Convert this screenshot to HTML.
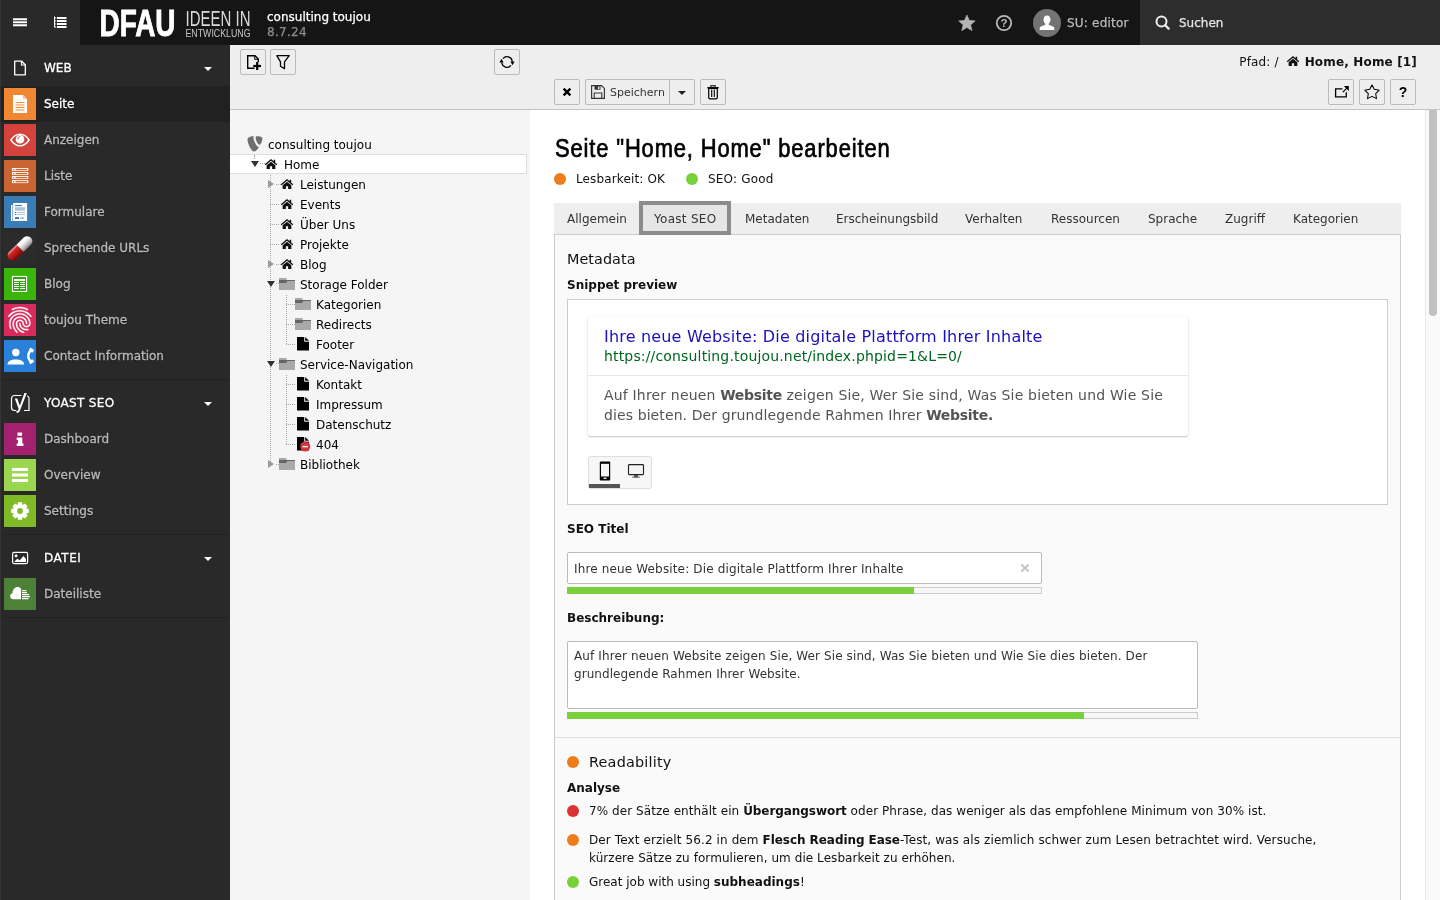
<!DOCTYPE html>
<html lang="de">
<head>
<meta charset="utf-8">
<title>consulting toujou [TYPO3 CMS 8.7.24]</title>
<style>
*{box-sizing:border-box;margin:0;padding:0}
html,body{width:1440px;height:900px;overflow:hidden;background:#fff}
body>div{will-change:transform;filter:grayscale(0)}
body{font-family:"DejaVu Sans","Liberation Sans",sans-serif;font-size:12px;line-height:18px;color:#111;position:relative}
.abs{position:absolute}
svg{display:block}
/* ---------- topbar ---------- */
#topbar{position:absolute;left:0;top:0;width:1440px;height:45px;background:#151515;color:#fff}
#toggles{position:absolute;left:0;top:0;width:80px;height:45px;background:#292929;border-left:1px solid #363636}
#sitename{position:absolute;left:267px;top:10px;font-size:12px;line-height:14px;color:#fff;white-space:nowrap}
#sitename span{display:block;color:#8c8c8c;margin-top:1px;letter-spacing:.3px}
#user{letter-spacing:.2px;position:absolute;left:1067px;top:16px;font-size:12px;line-height:14px;color:#bbb;white-space:nowrap}
#search{position:absolute;left:1140px;top:0;width:300px;height:45px;background:#2d2d2d}
#search span{position:absolute;left:39px;top:16px;font-size:12px;line-height:14px;color:#e6e6e6}
#sitename,#user,#search span{-webkit-text-stroke:.25px}
/* ---------- module menu ---------- */
#modmenu{position:absolute;left:0;top:45px;width:230px;height:855px;background:#292929;border-left:1px solid #363636}
.mgroup{position:absolute;left:0;width:229px;height:36px;color:#fff;font-size:12px}
.mgroup b{position:absolute;left:43px;top:9px;line-height:18px;font-weight:normal}
.mgroup i{position:absolute;left:203px;top:17px;width:0;height:0;border-left:4px solid transparent;border-right:4px solid transparent;border-top:4px solid #fff}
.mgroup svg{position:absolute;left:12px;top:10px}
.mitem{position:absolute;left:0;width:229px;height:36px;color:#b9b9b9;font-size:12px}
.mitem.act{background:#212121;color:#fff}
.mitem span{position:absolute;left:43px;top:9px;line-height:18px;white-space:nowrap}
.mitem .ic{position:absolute;left:3px;top:2px;width:32px;height:32px}
.mgroup b,.mitem span{-webkit-text-stroke:.3px;text-shadow:0 1px 1px rgba(0,0,0,.55)}
.msep{position:absolute;left:0;width:229px;height:1px;background:#222}
/* ---------- tree ---------- */
#treehead{position:absolute;left:230px;top:45px;width:300px;height:65px;background:#eee;border-bottom:1px solid #c3c3c3}
#tree{position:absolute;left:230px;top:110px;width:300px;height:790px;background:#f5f5f5}
.btn{position:absolute;width:26px;height:26px;background:#eee;border:1px solid #bbb;border-radius:2px}
.tn{position:absolute;height:20px;line-height:22px;font-size:12px;color:#000;white-space:nowrap}
/* ---------- content ---------- */
#dochead{position:absolute;left:530px;top:45px;width:910px;height:65px;background:#eee;border-bottom:1px solid #c3c3c3}
#content{position:absolute;left:530px;top:110px;width:910px;height:790px;background:#fff;overflow:hidden}
</style>
</head>
<body>
<div id="topbar">
  <div id="toggles">
    <svg class="abs" style="left:11px;top:15px" width="16" height="16" viewBox="0 0 16 16"><path d="M1 3.300h14v1.900H1zM1 6.300h14v1.900H1zM1 9.300h14v1.900H1z" fill="#fff"/></svg>
    <svg class="abs" style="left:51px;top:15px" width="16" height="16" viewBox="0 0 16 16"><path d="M5 2h9.500v2H5zM5 5h9.500v2H5zM5 8h9.500v2H5zM5 11h9.500v2H5z" fill="#fff"/><path d="M2 1.500h1v11H2zM2 2.500h2.300v1H2zM2 5.500h2.300v1H2zM2 8.500h2.300v1H2zM2 11.500h2.300v1H2z" fill="#fff"/></svg>
  </div>
  <svg class="abs" style="left:96px;top:4px" width="160" height="38" viewBox="0 0 160 38">
    <text x="3.500" y="32" font-family="Liberation Sans, sans-serif" font-weight="bold" font-size="36.500" fill="#fff" stroke="#fff" stroke-width=".9" textLength="76" lengthAdjust="spacingAndGlyphs">DFAU</text>
    <text x="89.500" y="21.500" font-family="Liberation Sans, sans-serif" font-size="22" fill="#d9d9d9" textLength="65" lengthAdjust="spacingAndGlyphs">IDEEN IN</text>
    <text x="89.500" y="32.500" font-family="Liberation Sans, sans-serif" font-size="11.500" fill="#c4c4c4" textLength="65" lengthAdjust="spacingAndGlyphs">ENTWICKLUNG</text>
  </svg>
  <div id="sitename">consulting toujou<span>8.7.24</span></div>
  <svg class="abs" style="left:958px;top:14px" width="18" height="18" viewBox="0 0 18 18"><path d="M8.90 0.90L11.25 6.36L17.17 6.91L12.70 10.84L14.01 16.64L8.90 13.60L3.79 16.64L5.10 10.84L0.63 6.91L6.55 6.36z" fill="#b4b4b4" stroke="#b4b4b4" stroke-width=".6" stroke-linejoin="round"/></svg>
  <svg class="abs" style="left:995px;top:14px" width="18" height="18" viewBox="0 0 18 18"><circle cx="9" cy="9" r="7.200" fill="none" stroke="#b9b9b9" stroke-width="1.800"/><text x="9" y="13.200" text-anchor="middle" font-family="Liberation Sans, sans-serif" font-weight="bold" font-size="11.500" fill="#b9b9b9">?</text></svg>
  <svg class="abs" style="left:1033px;top:9px" width="28" height="28" viewBox="0 0 28 28"><circle cx="14" cy="14" r="14" fill="#737373"/><path d="M14 6.500c2.200 0 3.500 1.700 3.500 4 0 1.800-.8 3.500-1.800 4.300v1l4.300 1.700c.9.400 1.300 1 1.300 2v1.500H6.700v-1.500c0-1 .4-1.600 1.300-2l4.300-1.700v-1c-1-.8-1.800-2.500-1.800-4.300 0-2.300 1.300-4 3.500-4z" fill="#fff"/></svg>
  <div id="user">SU: editor</div>
  <div id="search"><svg class="abs" style="left:15px;top:15px" width="16" height="16" viewBox="0 0 16 16"><circle cx="6.500" cy="6.500" r="5" fill="none" stroke="#ededed" stroke-width="2"/><path d="M10.300 10.300l3.300 3.300" stroke="#ededed" stroke-width="2.300" stroke-linecap="round"/></svg><span>Suchen</span></div>
</div>
<div id="modmenu">
<div class="mgroup" style="top:5px"><svg width="14" height="16" viewBox="0 0 14 16"><path d="M1.700 1.200h7l3.600 3.600v10H1.700z" fill="none" stroke="#fff" stroke-width="1.300" stroke-linejoin="round"/><path d="M8.500 1.200v3.800h3.800" fill="none" stroke="#fff" stroke-width="1.200"/></svg><b>WEB</b><i></i></div>
<div class="mitem act" style="top:41px"><svg class="ic" viewBox="0 0 32 32"><rect width="32" height="32" fill="#ef8733"/><path d="M9 7h10l4 4v14H9z" fill="#fff"/><path d="M19 7l4 4h-4z" fill="#f7c096"/><path d="M11.500 14.500h9M11.500 17h9M11.500 19.500h9M11.500 22h9" stroke="#ef8733" stroke-width="1.200"/></svg><span>Seite</span></div>
<div class="mitem" style="top:77px"><svg class="ic" viewBox="0 0 32 32"><rect width="32" height="32" fill="#d4423c"/><path d="M6.900 16C9.500 12.100 12.500 10.200 16 10.200s6.500 1.900 9.100 5.800c-2.600 3.900-5.600 5.800-9.100 5.800s-6.500-1.900-9.100-5.800z" fill="none" stroke="#fff" stroke-width="1.400" stroke-linejoin="round"/><circle cx="16" cy="15.200" r="4.300" fill="#fff"/><path d="M13.700 14.900a2.500 2.500 0 0 1 2.100-2.300" fill="none" stroke="#d4423c" stroke-width=".9" stroke-linecap="round"/></svg><span>Anzeigen</span></div>
<div class="mitem" style="top:113px"><svg class="ic" viewBox="0 0 32 32"><rect width="32" height="32" fill="#ca6431"/><rect x="8" y="8" width="16.300" height="2.900" fill="#fff"/><rect x="11.600" y="8.9" width="11.700" height="1.300" fill="#ca6431"/><rect x="9.100" y="8.9" width="1.200" height="1.300" fill="#ca6431"/><rect x="8" y="12" width="16.300" height="2.900" fill="#fff"/><rect x="11.600" y="12.9" width="11.700" height="1.300" fill="#ca6431"/><rect x="9.100" y="12.9" width="1.200" height="1.300" fill="#ca6431"/><rect x="8" y="16" width="16.300" height="2.900" fill="#fff"/><rect x="11.600" y="16.9" width="11.700" height="1.300" fill="#ca6431"/><rect x="9.100" y="16.9" width="1.200" height="1.300" fill="#ca6431"/><rect x="8" y="20.2" width="16.300" height="2.900" fill="#fff"/><rect x="11.600" y="21.1" width="11.700" height="1.300" fill="#ca6431"/><rect x="9.100" y="21.1" width="1.200" height="1.300" fill="#ca6431"/></svg><span>Liste</span></div>
<div class="mitem" style="top:149px"><svg class="ic" viewBox="0 0 32 32"><rect width="32" height="32" fill="#3a7db4"/><path d="M7 9.100h1.500V25H7z" fill="#fff"/><path d="M9.100 7h14v18h-14z" fill="#fff"/><path d="M11 9.100h7v1H11z" fill="#2f6fa5"/><path d="M11 11.200h10v3.500H11z" fill="#a9c6df"/><path d="M11 16h1.200v1H11zM11 18h1.200v1H11z" fill="#2f6fa5"/><path d="M13.300 16.100h7.700v.8h-7.700zM13.300 18.100h7.700v.8h-7.700z" fill="#a9c6df"/><path d="M11 21.200h4v1.800h-4z" fill="#2f6fa5"/><path d="M16.200 21.200h3.800v1.800h-3.800z" fill="#a9c6df"/></svg><span>Formulare</span></div>
<div class="mitem" style="top:185px"><svg class="ic" viewBox="0 0 32 32"><defs><linearGradient id="pg1" x1="0" y1="0" x2="0" y2="1"><stop offset="0" stop-color="#fff"/><stop offset=".35" stop-color="#f2f2f2"/><stop offset=".75" stop-color="#b5b5b5"/><stop offset="1" stop-color="#7a7a7a"/></linearGradient><linearGradient id="pg2" x1="0" y1="0" x2="0" y2="1"><stop offset="0" stop-color="#f7b4b4"/><stop offset=".25" stop-color="#d42626"/><stop offset=".7" stop-color="#a51212"/><stop offset="1" stop-color="#7a0c0c"/></linearGradient></defs><rect width="32" height="32" fill="#2b2b2b"/><g transform="rotate(-44 16 16.300)"><path d="M16 11.200h10.100a5.100 5.100 0 0 1 0 10.200H16z" fill="url(#pg1)"/><path d="M16 11.200H5.900a5.100 5.100 0 0 0 0 10.200H16z" fill="url(#pg2)"/></g></svg><span>Sprechende URLs</span></div>
<div class="mitem" style="top:221px"><svg class="ic" viewBox="0 0 32 32"><rect width="32" height="32" fill="#39b40a"/><rect x="8.450" y="8.450" width="14.100" height="15" fill="#2fa806" stroke="#fff" stroke-width="1.100"/><path d="M10 11.100h11v1.800H10zM10 14h4.900v1H10zM16.200 14h4.800v1h-4.800zM10 16h4.900v1H10zM16.200 16h4.800v1h-4.800zM10 18h4.900v1H10zM16.200 18h4.800v1h-4.800zM10 20h4.900v1H10zM16.200 20h4.800v1h-4.800z" fill="#fff"/></svg><span>Blog</span></div>
<div class="mitem" style="top:257px"><svg class="ic" viewBox="0 0 32 32"><rect width="32" height="32" fill="#d92b5b"/><path transform="translate(.3 .4) scale(1.300)" stroke="#fff" stroke-width=".2" d="M17.81 4.47c-.08 0-.16-.02-.23-.06C15.66 3.420 14 3 12.010 3c-1.980 0-3.860.47-5.570 1.410-.24.13-.54.04-.68-.2-.13-.24-.04-.55.2-.68C7.820 2.520 9.860 2 12.010 2c2.130 0 3.990.47 6.030 1.520.25.13.34.43.21.67-.09.18-.26.28-.44.28zM3.500 9.720c-.1 0-.2-.03-.29-.09-.23-.16-.28-.47-.12-.7.99-1.400 2.250-2.500 3.750-3.270C9.980 4.040 14 4.030 17.150 5.650c1.500.77 2.760 1.860 3.750 3.250.16.22.11.54-.12.7-.23.16-.54.11-.7-.12-.9-1.260-2.040-2.250-3.390-2.940-2.870-1.470-6.540-1.470-9.400.01-1.360.7-2.500 1.700-3.400 2.960-.08.14-.23.21-.39.21zm6.250 12.070c-.13 0-.26-.05-.35-.15-.87-.87-1.340-1.430-2.010-2.640-.69-1.230-1.050-2.730-1.050-4.340 0-2.970 2.540-5.390 5.660-5.390s5.660 2.420 5.660 5.390c0 .28-.22.5-.5.5s-.5-.22-.5-.5c0-2.420-2.090-4.390-4.660-4.390-2.570 0-4.660 1.970-4.660 4.390 0 1.440.32 2.770.93 3.850.64 1.150 1.080 1.640 1.850 2.420.19.2.19.51 0 .71-.11.1-.24.15-.37.15zm7.170-1.850c-1.190 0-2.240-.3-3.100-.89-1.490-1.010-2.380-2.650-2.380-4.390 0-.28.22-.5.5-.5s.5.22.5.5c0 1.410.72 2.740 1.940 3.560.71.48 1.540.71 2.540.71.24 0 .64-.03 1.040-.1.27-.05.53.13.58.41.05.27-.13.53-.41.58-.57.11-1.070.12-1.210.12zM14.910 22c-.04 0-.09-.01-.13-.02-1.590-.44-2.630-1.030-3.720-2.100-1.400-1.390-2.170-3.240-2.170-5.220 0-1.620 1.380-2.940 3.080-2.940 1.700 0 3.080 1.320 3.080 2.940 0 1.070.93 1.940 2.080 1.940s2.080-.87 2.080-1.940c0-3.770-3.250-6.830-7.250-6.830-2.840 0-5.440 1.580-6.610 4.030-.39.81-.59 1.760-.59 2.800 0 .78.07 2.010.67 3.610.1.26-.03.55-.29.64-.26.1-.55-.04-.64-.29-.49-1.310-.73-2.610-.73-3.960 0-1.200.23-2.290.68-3.240 1.330-2.790 4.280-4.600 7.510-4.600 4.550 0 8.250 3.510 8.250 7.830 0 1.620-1.380 2.940-3.080 2.940s-3.080-1.320-3.080-2.940c0-1.070-.93-1.940-2.080-1.940s-2.080.87-2.080 1.940c0 1.710.66 3.310 1.870 4.510.95.94 1.860 1.460 3.270 1.850.27.07.42.35.35.61-.05.23-.26.38-.47.38z" fill="#fff"/></svg><span>toujou Theme</span></div>
<div class="mitem" style="top:293px"><svg class="ic" viewBox="0 0 32 32"><rect width="32" height="32" fill="#2b80d9"/><circle cx="11.800" cy="12.500" r="3.700" fill="#fff"/><path d="M3.500 24.500c0-3 3.400-4.900 8.300-4.900s8.300 1.900 8.300 4.900z" fill="#fff"/><path d="M27.200 10.300C23.300 13 23.300 18.800 27.200 21.500" fill="none" stroke="#fff" stroke-width="2.300"/><rect x="-1.700" y="-2.300" width="3.400" height="4.600" rx="1" fill="#fff" transform="translate(27.400 10.200) rotate(-58)"/><rect x="-1.700" y="-2.300" width="3.400" height="4.600" rx="1" fill="#fff" transform="translate(27.400 21.600) rotate(58)"/></svg><span>Contact Information</span></div>
<div class="msep" style="top:334px"></div>
<div class="mgroup" style="top:340px"><svg width="22" height="22" viewBox="0 0 22 22" style="left:8px;top:7px"><path d="M12.500 3.500H5.500a3 3 0 0 0-3 3v9a3 3 0 0 0 3 3h1.800M15 18.500h5V6.500a3 3 0 0 0-1.800-2.700" fill="none" stroke="#fff" stroke-width="1.200"/><path d="M17.800 1L11 18.500c-.7 1.800-1.800 2.500-3.500 2.500v-2c1 0 1.500-.4 1.800-1.300l.3-1L5.800 6.500H8.300l2.500 7.300 4.600-12.800z" fill="#fff"/></svg><b style="letter-spacing:.33px">YOAST SEO</b><i></i></div>
<div class="mitem" style="top:376px"><svg class="ic" viewBox="0 0 32 32"><rect width="32" height="32" fill="#a4216f"/><path d="M13.500 9.500h4.600v3.300h-4.600zM12.700 14.600h5.600v6h1.200V23h-6.800v-2.400h1.300v-3.700h-1.300z" fill="#fff"/></svg><span>Dashboard</span></div>
<div class="mitem" style="top:412px"><svg class="ic" viewBox="0 0 32 32"><rect width="32" height="32" fill="#9bd650"/><path d="M8 9h16v3H8zM8 14.500h16v3H8zM8 20h16v3H8z" fill="#fff"/></svg><span>Overview</span></div>
<div class="mitem" style="top:448px"><svg class="ic" viewBox="0 0 32 32"><rect width="32" height="32" fill="#80ba27"/><path d="M24.78 14.04L24.78 17.96L22.10 18.51L22.09 18.54L23.60 20.82L20.82 23.60L18.54 22.09L18.51 22.10L17.96 24.78L14.04 24.78L13.49 22.10L13.46 22.09L11.18 23.60L8.40 20.82L9.91 18.54L9.90 18.51L7.22 17.96L7.22 14.04L9.90 13.49L9.91 13.46L8.40 11.18L11.18 8.40L13.46 9.91L13.49 9.90L14.04 7.22L17.96 7.22L18.51 9.90L18.54 9.91L20.82 8.40L23.60 11.18L22.09 13.46L22.10 13.49z" fill="#fff"/><circle cx="16" cy="16" r="2.900" fill="#80ba27"/></svg><span>Settings</span></div>
<div class="msep" style="top:489px"></div>
<div class="mgroup" style="top:495px"><svg width="18" height="14" viewBox="0 0 18 14" style="left:10px;top:11px"><rect x="1.600" y="1.400" width="15" height="11.200" rx="1.500" fill="none" stroke="#fff" stroke-width="1.200"/><circle cx="5" cy="4.800" r="1.500" fill="#fff"/><path d="M3 11l3.500-3.500 2 2L12.500 5l2.500 3v3z" fill="#fff"/></svg><b style="letter-spacing:.5px">DATEI</b><i></i></div>
<div class="mitem" style="top:531px"><svg class="ic" viewBox="0 0 32 32"><rect width="32" height="32" fill="#4c8137"/><path d="M17 21.200H9.300c-2 0-3.200-1.400-3.200-3 0-1.500 1-2.700 2.300-3 .3-3.500 2.300-6.100 5.200-6.100 1.400 0 2.600.6 3.400 1.500z" fill="#fff"/><path d="M18 12h4.400v1.200H18zM18 14h5.100v1.200H18zM18 16h7.200v1.200H18zM18 18h7.900v1.200H18zM18 20h6.500v1.200H18z" fill="#fff"/></svg><span>Dateiliste</span></div>
<div class="msep" style="top:572px"></div>
</div>
<div id="treehead">
<div class="btn" style="left:10px;top:4px"><svg class="abs" style="left:4px;top:4px" width="16" height="16" viewBox="0 0 16 16"><path d="M9.500 14.300H2.700V1.700h7.300l3.300 3.300v3" fill="none" stroke="#000" stroke-width="1.400"/><path d="M9.700 1.700v3.600h3.600" fill="none" stroke="#000" stroke-width="1"/><path d="M8.200 10.900h8v2.200h-8z" fill="#000"/><path d="M11.100 8h2.200v8h-2.200z" fill="#000"/></svg></div>
<div class="btn" style="left:40px;top:4px"><svg class="abs" style="left:4px;top:4px" width="16" height="16" viewBox="0 0 16 16"><path d="M1.800 1.700h12.400L9.500 7.800v7l-4-2.600V7.800z" fill="none" stroke="#000" stroke-width="1.300" stroke-linejoin="round"/></svg></div>
<div class="btn" style="left:264px;top:4px"><svg class="abs" style="left:4px;top:4px" width="16" height="16" viewBox="0 0 16 16"><path d="M3.940 4.590A5.300 5.300 0 0 1 13.270 7.450" fill="none" stroke="#000" stroke-width="1.250"/><path d="M12.060 11.410A5.300 5.300 0 0 1 2.730 8.550" fill="none" stroke="#000" stroke-width="1.250"/><path d="M.4 8.600h4.200L2.500 4.700z" fill="#000"/><path d="M11.400 7.400h4.200l-2.100 3.900z" fill="#000"/></svg></div>
</div>
<div id="tree">
<div class="abs" style="left:0;top:44px;width:297px;height:20px;background:#fff;border:1px solid #ddd;border-left:0"></div>
<i class="abs" style="left:24px;top:45px;width:0;height:4px;border-left:1px dotted #aaa"></i><i class="abs" style="left:40px;top:65px;width:0;height:289px;border-left:1px dotted #aaa"></i><i class="abs" style="left:56px;top:185px;width:0;height:49px;border-left:1px dotted #aaa"></i><i class="abs" style="left:56px;top:265px;width:0;height:69px;border-left:1px dotted #aaa"></i><svg class="abs" style="left:17px;top:26px" width="16" height="16" viewBox="0 0 16 16"><path d="M11.300 10.500c-.2.100-.4.100-.7.100-2 0-5-7-5-9.400 0-.9.200-1.100.5-1.400C3.600.1 .8.900 0 2c-.2.300-.3.700-.3 1.200C-.3 6.900 3.600 15.300 6.400 15.300c1.300 0 3.500-2.100 4.900-4.800z" fill="#6f6f6f" transform="translate(.8 .3)"/><path d="M10.200 0c2.600 0 5.200.4 5.200 1.900 0 3-1.900 6.600-2.900 6.600-1.700 0-3.900-4.800-3.900-7.200 0-1.100.4-1.300 1.600-1.300z" fill="#6f6f6f" transform="translate(0 .3)"/></svg><div class="tn" style="left:38px;top:24px">consulting toujou</div>
<i class="abs" style="left:30px;top:53px;width:5px;height:0;border-top:1px dotted #aaa"></i><i class="abs" style="left:21px;top:51px;width:0;height:0;border-left:4px solid transparent;border-right:4px solid transparent;border-top:6px solid #333"></i><svg class="abs" style="left:33px;top:46px" width="16" height="16" viewBox="0 0 16 16"><g transform="translate(8 8.300) scale(.93) translate(-8 -8.300)"><path d="M8 2.600L1.300 8.300l.9 1L8 4.500l5.800 4.800.9-1-2.200-1.900V3.300h-1.700v1.700z" fill="#111"/><path d="M8 5.500l-4.700 3.900v4h3.500v-3h2.400v3h3.500v-4z" fill="#111"/></g></svg><div class="tn" style="left:54px;top:44px">Home</div>
<i class="abs" style="left:46px;top:74px;width:5px;height:0;border-top:1px dotted #aaa"></i><i class="abs" style="left:38px;top:70px;width:0;height:0;border-top:4px solid transparent;border-bottom:4px solid transparent;border-left:6px solid #999"></i><svg class="abs" style="left:49px;top:66px" width="16" height="16" viewBox="0 0 16 16"><g transform="translate(8 8.300) scale(.93) translate(-8 -8.300)"><path d="M8 2.600L1.300 8.300l.9 1L8 4.500l5.800 4.800.9-1-2.200-1.900V3.300h-1.700v1.700z" fill="#111"/><path d="M8 5.500l-4.700 3.900v4h3.500v-3h2.400v3h3.500v-4z" fill="#111"/></g></svg><div class="tn" style="left:70px;top:64px">Leistungen</div>
<i class="abs" style="left:40px;top:94px;width:9px;height:0;border-top:1px dotted #aaa"></i><svg class="abs" style="left:49px;top:86px" width="16" height="16" viewBox="0 0 16 16"><g transform="translate(8 8.300) scale(.93) translate(-8 -8.300)"><path d="M8 2.600L1.300 8.300l.9 1L8 4.500l5.800 4.800.9-1-2.200-1.900V3.300h-1.700v1.700z" fill="#111"/><path d="M8 5.500l-4.700 3.900v4h3.500v-3h2.400v3h3.500v-4z" fill="#111"/></g></svg><div class="tn" style="left:70px;top:84px">Events</div>
<i class="abs" style="left:40px;top:114px;width:9px;height:0;border-top:1px dotted #aaa"></i><svg class="abs" style="left:49px;top:106px" width="16" height="16" viewBox="0 0 16 16"><g transform="translate(8 8.300) scale(.93) translate(-8 -8.300)"><path d="M8 2.600L1.300 8.300l.9 1L8 4.500l5.800 4.800.9-1-2.200-1.900V3.300h-1.700v1.700z" fill="#111"/><path d="M8 5.500l-4.700 3.900v4h3.500v-3h2.400v3h3.500v-4z" fill="#111"/></g></svg><div class="tn" style="left:70px;top:104px">Über Uns</div>
<i class="abs" style="left:40px;top:134px;width:9px;height:0;border-top:1px dotted #aaa"></i><svg class="abs" style="left:49px;top:126px" width="16" height="16" viewBox="0 0 16 16"><g transform="translate(8 8.300) scale(.93) translate(-8 -8.300)"><path d="M8 2.600L1.300 8.300l.9 1L8 4.500l5.800 4.800.9-1-2.200-1.900V3.300h-1.700v1.700z" fill="#111"/><path d="M8 5.500l-4.700 3.900v4h3.500v-3h2.400v3h3.500v-4z" fill="#111"/></g></svg><div class="tn" style="left:70px;top:124px">Projekte</div>
<i class="abs" style="left:46px;top:154px;width:5px;height:0;border-top:1px dotted #aaa"></i><i class="abs" style="left:38px;top:150px;width:0;height:0;border-top:4px solid transparent;border-bottom:4px solid transparent;border-left:6px solid #999"></i><svg class="abs" style="left:49px;top:146px" width="16" height="16" viewBox="0 0 16 16"><g transform="translate(8 8.300) scale(.93) translate(-8 -8.300)"><path d="M8 2.600L1.300 8.300l.9 1L8 4.500l5.800 4.800.9-1-2.200-1.900V3.300h-1.700v1.700z" fill="#111"/><path d="M8 5.500l-4.700 3.900v4h3.500v-3h2.400v3h3.500v-4z" fill="#111"/></g></svg><div class="tn" style="left:70px;top:144px">Blog</div>
<i class="abs" style="left:46px;top:173px;width:3px;height:0;border-top:1px dotted #aaa"></i><i class="abs" style="left:37px;top:171px;width:0;height:0;border-left:4px solid transparent;border-right:4px solid transparent;border-top:6px solid #333"></i><svg class="abs" style="left:49px;top:166px" width="16" height="16" viewBox="0 0 16 16"><path d="M0 2.100h7l1 1.900h8v9.900H0z" fill="#a9a9a9"/><path d="M0 4h16v1.100H8.200l-1 1.800H0z" fill="#666"/></svg><div class="tn" style="left:70px;top:164px">Storage Folder</div>
<i class="abs" style="left:56px;top:194px;width:9px;height:0;border-top:1px dotted #aaa"></i><svg class="abs" style="left:65px;top:186px" width="16" height="16" viewBox="0 0 16 16"><path d="M0 2.100h7l1 1.900h8v9.900H0z" fill="#a9a9a9"/><path d="M0 4h16v1.100H8.200l-1 1.800H0z" fill="#666"/></svg><div class="tn" style="left:86px;top:184px">Kategorien</div>
<i class="abs" style="left:56px;top:214px;width:9px;height:0;border-top:1px dotted #aaa"></i><svg class="abs" style="left:65px;top:206px" width="16" height="16" viewBox="0 0 16 16"><path d="M0 2.100h7l1 1.900h8v9.900H0z" fill="#a9a9a9"/><path d="M0 4h16v1.100H8.200l-1 1.800H0z" fill="#666"/></svg><div class="tn" style="left:86px;top:204px">Redirects</div>
<i class="abs" style="left:56px;top:234px;width:9px;height:0;border-top:1px dotted #aaa"></i><svg class="abs" style="left:65px;top:226px" width="16" height="16" viewBox="0 0 16 16"><path d="M2 1h7.200v4.800H14v8.600H2z" fill="#000"/><path d="M10.200 1l3.800 3.800h-3.800z" fill="#000"/></svg><div class="tn" style="left:86px;top:224px">Footer</div>
<i class="abs" style="left:46px;top:253px;width:3px;height:0;border-top:1px dotted #aaa"></i><i class="abs" style="left:37px;top:251px;width:0;height:0;border-left:4px solid transparent;border-right:4px solid transparent;border-top:6px solid #333"></i><svg class="abs" style="left:49px;top:246px" width="16" height="16" viewBox="0 0 16 16"><path d="M0 2.100h7l1 1.900h8v9.900H0z" fill="#a9a9a9"/><path d="M0 4h16v1.100H8.200l-1 1.800H0z" fill="#666"/></svg><div class="tn" style="left:70px;top:244px">Service-Navigation</div>
<i class="abs" style="left:56px;top:274px;width:9px;height:0;border-top:1px dotted #aaa"></i><svg class="abs" style="left:65px;top:266px" width="16" height="16" viewBox="0 0 16 16"><path d="M2 1h7.200v4.800H14v8.600H2z" fill="#000"/><path d="M10.200 1l3.800 3.800h-3.800z" fill="#000"/></svg><div class="tn" style="left:86px;top:264px">Kontakt</div>
<i class="abs" style="left:56px;top:294px;width:9px;height:0;border-top:1px dotted #aaa"></i><svg class="abs" style="left:65px;top:286px" width="16" height="16" viewBox="0 0 16 16"><path d="M2 1h7.200v4.800H14v8.600H2z" fill="#000"/><path d="M10.200 1l3.800 3.800h-3.800z" fill="#000"/></svg><div class="tn" style="left:86px;top:284px">Impressum</div>
<i class="abs" style="left:56px;top:314px;width:9px;height:0;border-top:1px dotted #aaa"></i><svg class="abs" style="left:65px;top:306px" width="16" height="16" viewBox="0 0 16 16"><path d="M2 1h7.200v4.800H14v8.600H2z" fill="#000"/><path d="M10.200 1l3.800 3.800h-3.800z" fill="#000"/></svg><div class="tn" style="left:86px;top:304px">Datenschutz</div>
<i class="abs" style="left:56px;top:334px;width:9px;height:0;border-top:1px dotted #aaa"></i><svg class="abs" style="left:65px;top:326px" width="16" height="16" viewBox="0 0 16 16"><path d="M2 1h7.200v4.800H14v8.600H2z" fill="#000"/><path d="M10.200 1l3.800 3.800h-3.800z" fill="#000"/><circle cx="10.200" cy="10.600" r="5" fill="#d1343a"/><path d="M7.500 9.900h5.400v1.400H7.500z" fill="#fff"/></svg><div class="tn" style="left:86px;top:324px">404</div>
<i class="abs" style="left:46px;top:354px;width:3px;height:0;border-top:1px dotted #aaa"></i><i class="abs" style="left:38px;top:350px;width:0;height:0;border-top:4px solid transparent;border-bottom:4px solid transparent;border-left:6px solid #999"></i><svg class="abs" style="left:49px;top:346px" width="16" height="16" viewBox="0 0 16 16"><path d="M0 2.100h7l1 1.900h8v9.900H0z" fill="#a9a9a9"/><path d="M0 4h16v1.100H8.200l-1 1.800H0z" fill="#666"/></svg><div class="tn" style="left:70px;top:344px">Bibliothek</div>
</div>
<div id="dochead">
<div class="abs" style="right:23px;top:8px;font-size:12px;line-height:18px;color:#111;white-space:nowrap;letter-spacing:.16px">Pfad: / <svg style="display:inline-block;vertical-align:-3px;margin:0 0 0 2px" width="16" height="16" viewBox="0 0 16 16"><g transform="translate(8 8.300) scale(.93) translate(-8 -8.300)"><path d="M8 2.600L1.300 8.300l.9 1L8 4.500l5.800 4.800.9-1-2.200-1.900V3.300h-1.700v1.700z" fill="#111"/><path d="M8 5.500l-4.700 3.900v4h3.500v-3h2.400v3h3.500v-4z" fill="#111"/></g></svg> <b>Home, Home [1]</b></div>
<div class="btn" style="left:24px;top:34px"><svg class="abs" style="left:4px;top:4px" width="16" height="16" viewBox="0 0 16 16"><path d="M4.600 4.600l6.800 6.800M11.400 4.600l-6.800 6.800" stroke="#000" stroke-width="2.300"/></svg></div>
<div class="btn" style="left:55px;top:34px;width:85px;border-radius:2px 0 0 2px"><svg class="abs" style="left:4px;top:4px" width="16" height="16" viewBox="0 0 16 16"><path d="M1.600 1.600h10l2.800 2.800v10H1.600z" fill="none" stroke="#333" stroke-width="1.150"/><path d="M4.500 1.700h6v4h-6z" fill="#333"/><path d="M8 2.500h1.500v2.400H8z" fill="#eee"/><path d="M4.200 14v-5h7.600v5" fill="none" stroke="#333" stroke-width="1.100"/></svg><span class="abs" style="left:24px;top:4px;font-size:11px;line-height:18px;color:#333;white-space:nowrap">Speichern</span></div>
<div class="btn" style="left:139px;top:34px;border-radius:0 2px 2px 0"><i class="abs" style="left:8px;top:11px;width:0;height:0;border-left:4px solid transparent;border-right:4px solid transparent;border-top:4px solid #222"></i></div>
<div class="btn" style="left:170px;top:34px"><svg class="abs" style="left:4px;top:4px" width="16" height="16" viewBox="0 0 16 16"><path d="M3.700 4.300h8.600v9.200a1.300 1.300 0 0 1-1.300 1.300H5a1.300 1.300 0 0 1-1.300-1.300z" fill="none" stroke="#000" stroke-width="1.200"/><path d="M2.300 3.700h11.400" stroke="#000" stroke-width="1.300"/><path d="M5.800 3.300V1.800h4.400v1.500" fill="none" stroke="#000" stroke-width="1.100"/><path d="M6.700 5.500v7.500M9.300 5.500v7.500" stroke="#000" stroke-width="1.100"/></svg></div>
<div class="btn" style="left:798px;top:34px"><svg class="abs" style="left:4px;top:4px" width="16" height="16" viewBox="0 0 16 16"><path d="M9.500 4.900H2.600v7.900h10.700V8.300" fill="none" stroke="#000" stroke-width="1.300"/><path d="M9.800 8.200l4-4" stroke="#000" stroke-width="1.200"/><path d="M10.800 2h5v5z" fill="#000"/></svg></div>
<div class="btn" style="left:829px;top:34px"><svg class="abs" style="left:4px;top:4px" width="16" height="16" viewBox="0 0 16 16"><path d="M8.00 0.90L10.29 5.34L15.23 6.15L11.71 9.71L12.47 14.65L8.00 12.40L3.53 14.65L4.29 9.71L0.77 6.15L5.71 5.34z" fill="none" stroke="#000" stroke-width="1.050" stroke-linejoin="round"/></svg></div>
<div class="btn" style="left:860px;top:34px"><span class="abs" style="left:0;top:3px;width:24px;text-align:center;font-family:'Liberation Sans',sans-serif;font-weight:bold;font-size:14px;line-height:18px;color:#000">?</span></div>
</div>
<div id="content">
<h1 class="abs" style="left:25px;top:21px;font-family:'Liberation Sans',sans-serif;font-weight:normal;font-size:25.500px;line-height:34px;white-space:nowrap;color:#000;transform-origin:0 0;transform:scaleX(.86);-webkit-text-stroke:.7px #000;letter-spacing:1px">Seite "Home, Home" bearbeiten</h1>
<i class="abs" style="left:24.0px;top:63.0px;width:12px;height:12px;border-radius:50%;background:#ee7c1b"></i>
<div class="abs" style="left:46px;top:60px;font-size:12px;line-height:18px;white-space:nowrap;;letter-spacing:0.133px;">Lesbarkeit: OK</div>
<i class="abs" style="left:156.0px;top:63.0px;width:12px;height:12px;border-radius:50%;background:#7ad03a"></i>
<div class="abs" style="left:178px;top:60px;font-size:12px;line-height:18px;white-space:nowrap;;letter-spacing:0.179px;">SEO: Good</div>
<div class="abs" style="left:24px;top:93px;width:847px;height:31px;background:#eee"></div>
<div class="abs" style="left:24px;top:124px;width:847px;height:676px;background:#fafafa;border:1px solid #ccc"></div>
<div class="abs" style="left:109px;top:91px;width:92px;height:34px;background:#e6e6e6;border:4px solid #8c8c8c"></div>
<div class="abs" style="left:37px;top:100px;font-size:12px;line-height:18px;white-space:nowrap;color:#333">Allgemein</div>
<div class="abs" style="left:124px;top:100px;font-size:12px;line-height:18px;white-space:nowrap;color:#333;letter-spacing:.28px">Yoast SEO</div>
<div class="abs" style="left:215px;top:100px;font-size:12px;line-height:18px;white-space:nowrap;color:#333">Metadaten</div>
<div class="abs" style="left:306px;top:100px;font-size:12px;line-height:18px;white-space:nowrap;color:#333">Erscheinungsbild</div>
<div class="abs" style="left:435px;top:100px;font-size:12px;line-height:18px;white-space:nowrap;color:#333">Verhalten</div>
<div class="abs" style="left:521px;top:100px;font-size:12px;line-height:18px;white-space:nowrap;color:#333">Ressourcen</div>
<div class="abs" style="left:618px;top:100px;font-size:12px;line-height:18px;white-space:nowrap;color:#333">Sprache</div>
<div class="abs" style="left:695px;top:100px;font-size:12px;line-height:18px;white-space:nowrap;color:#333">Zugriff</div>
<div class="abs" style="left:763px;top:100px;font-size:12px;line-height:18px;white-space:nowrap;color:#333">Kategorien</div>
<div class="abs" style="left:37px;top:139px;font-size:14.4px;line-height:20px;white-space:nowrap;;letter-spacing:0.043px;">Metadata</div>
<div class="abs" style="left:37px;top:166px;font-size:12px;line-height:18px;white-space:nowrap;"><b>Snippet preview</b></div>
<div class="abs" style="left:37px;top:189px;width:821px;height:206px;background:#fff;border:1px solid #ccc"></div>
<div class="abs" style="left:58px;top:206px;width:600px;height:120px;background:#fff;border-radius:2px;box-shadow:0 1px 2px rgba(0,0,0,.22),0 0 1px rgba(0,0,0,.12)"></div>
<div class="abs" style="left:58px;top:265px;width:600px;height:1px;background:#e6e6e6"></div>
<div class="abs" style="left:74px;top:217px;font-size:16px;line-height:20px;white-space:nowrap;color:#1e0fbe;letter-spacing:0.182px;">Ihre neue Website: Die digitale Plattform Ihrer Inhalte</div>
<div class="abs" style="left:74px;top:237px;font-size:14px;line-height:18px;white-space:nowrap;color:#006621;letter-spacing:0.161px;">https://consulting.toujou.net/index.phpid=1&amp;L=0/</div>
<div class="abs" style="left:74px;top:275px;font-size:14px;line-height:20px;white-space:nowrap;color:#545454;letter-spacing:0.174px;">Auf Ihrer neuen <b style="letter-spacing:-0.29px">Website</b> zeigen Sie, Wer Sie sind, Was Sie bieten und Wie Sie</div>
<div class="abs" style="left:74px;top:295px;font-size:14px;line-height:20px;white-space:nowrap;color:#545454;letter-spacing:0.102px;">dies bieten. Der grundlegende Rahmen Ihrer <b style="letter-spacing:-0.29px">Website.</b></div>
<div class="abs" style="left:58px;top:346px;width:64px;height:33px;background:#f7f7f7;border:1px solid #ddd;border-radius:3px"></div>
<div class="abs" style="left:59px;top:374px;width:31px;height:4px;background:#555"></div>
<svg class="abs" style="left:69px;top:351px" width="12" height="20" viewBox="0 0 12 20"><rect x=".8" y=".5" width="10.400" height="19" rx="1" fill="#000"/><rect x="2" y="2.800" width="8" height="12.700" fill="#f4f4f4"/><ellipse cx="6" cy="17.300" rx="1.800" ry=".8" fill="#fff"/></svg>
<svg class="abs" style="left:97px;top:353px" width="18" height="16" viewBox="0 0 18 16"><rect x="1.500" y="1.600" width="15" height="10" rx=".8" fill="#f4f4f4" stroke="#222" stroke-width="1.150"/><path d="M7.200 12.200h3.600v1.500H7.200z" fill="#222"/><path d="M5.300 13.700h7.400v.9H5.300z" fill="#333"/></svg>
<div class="abs" style="left:37px;top:410px;font-size:12px;line-height:18px;white-space:nowrap;"><b>SEO Titel</b></div>
<div class="abs" style="left:37px;top:442px;width:475px;height:32px;background:#fff;border:1px solid #bbb;border-radius:2px"></div>
<div class="abs" style="left:44px;top:450px;font-size:12px;line-height:18px;white-space:nowrap;color:#333;letter-spacing:0.148px;">Ihre neue Website: Die digitale Plattform Ihrer Inhalte</div>
<svg class="abs" style="left:490px;top:453px" width="10" height="10" viewBox="0 0 10 10"><path d="M1.500 1.500l7 7M8.500 1.500l-7 7" stroke="#c4c4c4" stroke-width="1.900"/></svg>
<div class="abs" style="left:37px;top:477px;width:475px;height:7px;background:#f7f7f7;border:1px solid #ccc"></div>
<div class="abs" style="left:37px;top:477px;width:347px;height:7px;background:#7ad03a"></div>
<div class="abs" style="left:37px;top:499px;font-size:12px;line-height:18px;white-space:nowrap;"><b>Beschreibung:</b></div>
<div class="abs" style="left:37px;top:531px;width:631px;height:68px;background:#fff;border:1px solid #bbb;border-radius:2px"></div>
<div class="abs" style="left:44px;top:537px;font-size:12px;line-height:18px;white-space:nowrap;color:#333;letter-spacing:0.111px;">Auf Ihrer neuen Website zeigen Sie, Wer Sie sind, Was Sie bieten und Wie Sie dies bieten. Der</div>
<div class="abs" style="left:44px;top:555px;font-size:12px;line-height:18px;white-space:nowrap;color:#333;letter-spacing:0.055px;">grundlegende Rahmen Ihrer Website.</div>
<div class="abs" style="left:37px;top:602px;width:631px;height:7px;background:#f7f7f7;border:1px solid #ccc"></div>
<div class="abs" style="left:37px;top:602px;width:517px;height:7px;background:#7ad03a"></div>
<div class="abs" style="left:25px;top:627px;width:845px;height:1px;background:#ddd"></div>
<i class="abs" style="left:37.0px;top:645.5px;width:12px;height:12px;border-radius:50%;background:#ee7c1b"></i>
<div class="abs" style="left:59px;top:642px;font-size:14.4px;line-height:20px;white-space:nowrap;;letter-spacing:0.203px;">Readability</div>
<div class="abs" style="left:37px;top:669px;font-size:12px;line-height:18px;white-space:nowrap;"><b>Analyse</b></div>
<i class="abs" style="left:37.0px;top:694.5px;width:12px;height:12px;border-radius:50%;background:#dc3232"></i>
<div class="abs" style="left:59px;top:692px;font-size:12px;line-height:18px;white-space:nowrap;;letter-spacing:0.069px;">7% der Sätze enthält ein <b style="letter-spacing:-0.06px">Übergangswort</b> oder Phrase, das weniger als das empfohlene Minimum von 30% ist.</div>
<i class="abs" style="left:37.0px;top:723.5px;width:12px;height:12px;border-radius:50%;background:#ee7c1b"></i>
<div class="abs" style="left:59px;top:721px;font-size:12px;line-height:18px;white-space:nowrap;;letter-spacing:0.108px;">Der Text erzielt 56.2 in dem <b style="letter-spacing:-0.06px">Flesch Reading Ease</b>-Test, was als ziemlich schwer zum Lesen betrachtet wird. Versuche,</div>
<div class="abs" style="left:59px;top:739px;font-size:12px;line-height:18px;white-space:nowrap;;letter-spacing:0.064px;">kürzere Sätze zu formulieren, um die Lesbarkeit zu erhöhen.</div>
<i class="abs" style="left:37.0px;top:765.5px;width:12px;height:12px;border-radius:50%;background:#7ad03a"></i>
<div class="abs" style="left:59px;top:763px;font-size:12px;line-height:18px;white-space:nowrap;">Great job with using <b>subheadings</b>!</div>
<div class="abs" style="left:895px;top:0px;width:15px;height:790px;background:#fafafa;border-left:1px solid #e8e8e8"></div>
<div class="abs" style="left:899px;top:-6px;width:8px;height:212px;background:#c1c1c1;border-radius:4px"></div>
</div>
</body>
</html>
